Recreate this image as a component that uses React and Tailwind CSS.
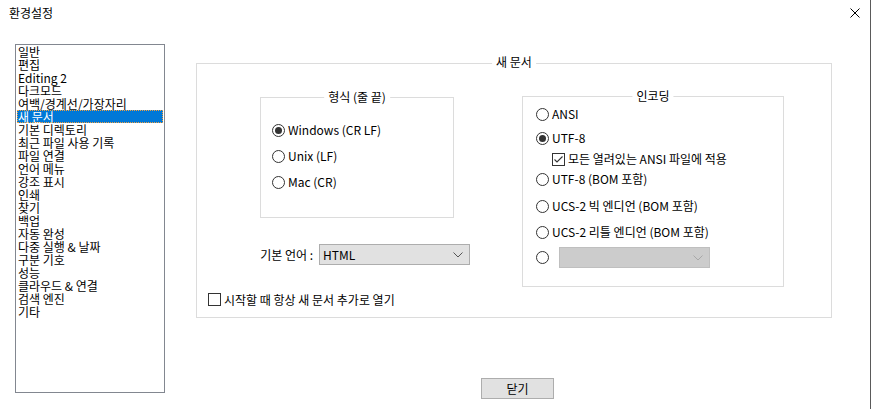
import React from "react";

const items = [
  "일반",
  "편집",
  "Editing 2",
  "다크모드",
  "여백/경계선/가장자리",
  "새 문서",
  "기본 디렉토리",
  "최근 파일 사용 기록",
  "파일 연결",
  "언어 메뉴",
  "강조 표시",
  "인쇄",
  "찾기",
  "백업",
  "자동 완성",
  "다중 실행 & 날짜",
  "구분 기호",
  "성능",
  "클라우드 & 연결",
  "검색 엔진",
  "기타",
];

function Radio({ checked }) {
  return (
    <span className="w-[13px] h-[13px] rounded-full border border-[#333333] bg-white flex items-center justify-center shrink-0">
      {checked && <span className="w-[7px] h-[7px] rounded-full bg-[#333333]" />}
    </span>
  );
}

function Check({ checked }) {
  return (
    <span className="w-[13px] h-[13px] border border-[#333333] bg-white flex items-center justify-center shrink-0">
      {checked && (
        <svg width="11" height="11" viewBox="0 0 11 11">
          <path d="M1.5 5.5 L4 8 L9.5 2.5" stroke="#333333" strokeWidth="1.1" fill="none" />
        </svg>
      )}
    </span>
  );
}

function Chevron({ color }) {
  return (
    <svg width="10" height="6" viewBox="0 0 10 6">
      <path d="M0.5 0.5 L5 5 L9.5 0.5" stroke={color} strokeWidth="1" fill="none" />
    </svg>
  );
}

export default function App() {
  return (
    <div className="w-[871px] h-[409px] bg-white border-r border-[#5a5a5a] text-black text-[12px] leading-[16px] font-['Noto_Sans_CJK_KR','Liberation_Sans',sans-serif] overflow-hidden">
      {/* title bar */}
      <div className="h-[26px] flex items-center justify-between pl-[9px] pr-[10px]">
        <span className="text-[12px]">환경설정</span>
        <svg width="10" height="10" viewBox="0 0 10 10">
          <path d="M0.5 0.5 L9.5 9.5 M9.5 0.5 L0.5 9.5" stroke="#000" strokeWidth="1" />
        </svg>
      </div>

      <div className="flex pt-[18px] pl-[15px]">
        {/* list */}
        <div className="w-[150px] h-[349px] border border-[#828790] px-[1px] shrink-0">
          {items.map((it) => (
            <div
              key={it}
              className={
                it === "새 문서"
                  ? "h-[13px] leading-[13px] pl-[1px] bg-[#0078d7] text-white outline-1 outline-dotted outline-[#f0a040] -outline-offset-1 whitespace-nowrap"
                  : "h-[13px] leading-[13px] pl-[1px] whitespace-nowrap"
              }
            >
              {it}
            </div>
          ))}
        </div>

        {/* right pane */}
        <div className="ml-[31px] mt-[19px] flex flex-col">
          <div className="relative w-[636px] h-[255px] border border-[#dcdcdc] flex pt-[32px] pl-[11px]">
            <span className="absolute left-1/2 -translate-x-1/2 top-[-10px] bg-white px-[4px] leading-[16px]">
              새 문서
            </span>

            {/* left column */}
            <div className="w-[314px] pt-[1px] flex flex-col">
              <div className="relative ml-[52px] w-[194px] h-[121px] border border-[#dcdcdc] flex flex-col gap-[10px] pt-[24px] pl-[11px]">
                <span className="absolute left-1/2 -translate-x-1/2 top-[-9px] bg-white px-[4px] leading-[16px] whitespace-nowrap">
                  형식 (줄 끝)
                </span>
                <div className="h-[16px] flex items-center gap-[3px]">
                  <Radio checked />
                  <span>Windows (CR LF)</span>
                </div>
                <div className="h-[16px] flex items-center gap-[3px]">
                  <Radio />
                  <span>Unix (LF)</span>
                </div>
                <div className="h-[16px] flex items-center gap-[3px]">
                  <Radio />
                  <span>Mac (CR)</span>
                </div>
              </div>

              <div className="mt-[26px] h-[21px] flex items-center">
                <span className="w-[111px] pr-[6px] text-right whitespace-nowrap">기본 언어 :</span>
                <div className="w-[151px] h-[21px] border border-[#adadad] bg-[#e1e1e1] flex items-center justify-between pl-[3px] pr-[6px]">
                  <span>HTML</span>
                  <Chevron color="#555555" />
                </div>
              </div>

              <div className="mt-[28px] h-[13px] flex items-center gap-[3px]">
                <Check />
                <span className="whitespace-nowrap">시작할 때 항상 새 문서 추가로 열기</span>
              </div>
            </div>

            {/* encoding */}
            <div className="relative w-[262px] h-[191px] border border-[#dcdcdc] flex flex-col pl-[13px]">
              <span className="absolute left-1/2 -translate-x-1/2 top-[-9px] bg-white px-[4px] leading-[16px]">
                인코딩
              </span>
              <div className="mt-[9px] h-[16px] flex items-center gap-[3px]">
                <Radio />
                <span>ANSI</span>
              </div>
              <div className="mt-[8px] h-[16px] flex items-center gap-[3px]">
                <Radio checked />
                <span>UTF-8</span>
              </div>
              <div className="mt-[5px] ml-[16px] h-[16px] flex items-center gap-[3px]">
                <Check checked />
                <span className="whitespace-nowrap">모든 열려있는 ANSI 파일에 적용</span>
              </div>
              <div className="mt-[4px] h-[16px] flex items-center gap-[3px]">
                <Radio />
                <span className="whitespace-nowrap">UTF-8 (BOM 포함)</span>
              </div>
              <div className="mt-[11px] h-[16px] flex items-center gap-[3px]">
                <Radio />
                <span className="whitespace-nowrap">UCS-2 빅 엔디언 (BOM 포함)</span>
              </div>
              <div className="mt-[10px] h-[16px] flex items-center gap-[3px]">
                <Radio />
                <span className="whitespace-nowrap">UCS-2 리틀 엔디언 (BOM 포함)</span>
              </div>
              <div className="mt-[7px] h-[21px] flex items-center gap-[10px]">
                <Radio />
                <div className="w-[151px] h-[21px] border border-[#bfbfbf] bg-[#cccccc] flex items-center justify-end pr-[6px]">
                  <Chevron color="#a8a8a8" />
                </div>
              </div>
            </div>
          </div>

          <div className="mt-[60px] ml-[285px] w-[73px] h-[21px] border border-[#adadad] bg-[#e1e1e1] flex items-center justify-center">
            닫기
          </div>
        </div>
      </div>
    </div>
  );
}
